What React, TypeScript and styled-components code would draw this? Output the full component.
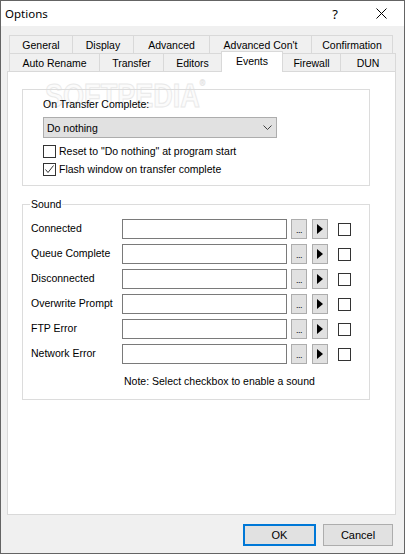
import React from "react";
import styled, { createGlobalStyle } from "styled-components";

const Global = createGlobalStyle`
  html, body { margin: 0; padding: 0; background: #ffffff; }
  body { font-family: "Liberation Sans", Arial, sans-serif; }
  *, *::before, *::after { box-sizing: border-box; }
`;

const Window = styled.div`
  width: 405px;
  height: 554px;
  border: 1px solid #646464;
  display: flex;
  flex-direction: column;
  background: #f0f0f0;
  font-family: "Liberation Sans", Arial, sans-serif;
  font-size: 10.5px;
  color: #000;
  overflow: hidden;
`;

const TitleBar = styled.div`
  height: 25px;
  flex: none;
  background: #ffffff;
  display: flex;
  align-items: center;
  padding-left: 4px;
`;

const Title = styled.div`
  flex: 1;
  font-family: "Noto Sans", "Liberation Sans", sans-serif;
  font-size: 11.5px;
  line-height: 25px;
`;

const CaptionButton = styled.div`
  width: 46px;
  height: 25px;
  display: flex;
  align-items: center;
  justify-content: center;
  font-family: "Noto Sans", "Liberation Sans", sans-serif;
  font-size: 13px;
`;

const Main = styled.div`
  flex: 1;
  padding: 9px 8px 0 6px;
  display: flex;
  flex-direction: column;
`;

const TabRow = styled.div`
  display: flex;
  height: 18px;
  margin-left: 2px;
`;

const Tab = styled.div<{ $w: number; $last?: boolean; $active?: boolean }>`
  width: ${(p) => p.$w}px;
  height: ${(p) => (p.$active ? 21 : 18)}px;
  margin-top: ${(p) => (p.$active ? -2 : 0)}px;
  margin-right: ${(p) => (p.$active ? -1 : 0)}px;
  border-top: 1px solid #d9d9d9;
  border-left: 1px solid #d9d9d9;
  border-right: ${(p) => (p.$last || p.$active ? "1px solid #d9d9d9" : "none")};
  background: ${(p) => (p.$active ? "#ffffff" : "#f0f0f0")};
  position: ${(p) => (p.$active ? "relative" : "static")};
  z-index: ${(p) => (p.$active ? 2 : "auto")};
  display: flex;
  align-items: ${(p) => (p.$active ? "flex-start" : "center")};
  justify-content: center;
  padding-top: ${(p) => (p.$active ? 3 : 1)}px;
  white-space: nowrap;
  flex: none;
`;

const Panel = styled.div`
  height: 444px;
  background: #ffffff;
  border: 1px solid #d9d9d9;
  padding: 17px 0 0 14px;
  position: relative;
  flex: none;
`;

const Watermark = styled.div`
  position: absolute;
  top: 7px;
  left: 37px;
  font-family: "Liberation Sans", Arial, sans-serif;
  font-weight: bold;
  font-size: 33px;
  line-height: 1;
  color: #fbfbfb;
  -webkit-text-stroke: 1px #e9e9e9;
  transform: scaleX(0.82);
  transform-origin: left top;
  pointer-events: none;
  z-index: 0;
  white-space: nowrap;
`;

const Reg = styled.span`
  font-size: 9px;
  vertical-align: top;
  -webkit-text-stroke: 0.5px #e6e6e6;
`;

const Group = styled.div<{ $mt?: number; $pad: string }>`
  width: 348px;
  border: 1px solid #dcdcdc;
  position: relative;
  margin-top: ${(p) => p.$mt ?? 0}px;
  padding: ${(p) => p.$pad};
  display: flex;
  flex-direction: column;
`;

const Legend = styled.span`
  position: absolute;
  top: -7px;
  left: 7px;
  padding: 0 1px;
  background: #ffffff;
  line-height: 13px;
`;

const Label = styled.div`
  line-height: 13px;
  height: 13px;
  position: relative;
`;

const Select = styled.div`
  width: 234px;
  height: 21px;
  margin-top: 6px;
  background: #e1e1e1;
  border: 1px solid #adadad;
  display: flex;
  align-items: center;
  justify-content: space-between;
  padding: 0 4px 0 3px;
`;

const CheckRow = styled.div<{ $mt: number }>`
  display: flex;
  align-items: center;
  gap: 3px;
  height: 13px;
  margin-top: ${(p) => p.$mt}px;
  line-height: 13px;
`;

const Box = styled.div`
  width: 13px;
  height: 13px;
  border: 1px solid #333333;
  background: #ffffff;
  display: flex;
  align-items: center;
  justify-content: center;
  flex: none;
`;

const Rows = styled.div`
  display: flex;
  flex-direction: column;
  gap: 5px;
`;

const SoundRow = styled.div`
  display: flex;
  align-items: center;
  height: 20px;
`;

const SoundLabel = styled.div`
  width: 91px;
  flex: none;
  padding-bottom: 2px;
  line-height: 13px;
  white-space: nowrap;
`;

const Field = styled.div`
  width: 165px;
  height: 20px;
  border: 1px solid #7a7a7a;
  background: #ffffff;
  flex: none;
`;

const SmallButton = styled.div<{ $ml: number }>`
  width: 16px;
  height: 20px;
  margin-left: ${(p) => p.$ml}px;
  background: #e1e1e1;
  border: 1px solid #adadad;
  display: flex;
  justify-content: center;
  flex: none;
`;

const Dots = styled(SmallButton)`
  align-items: flex-end;
  font-size: 9px;
  line-height: 9px;
  padding-bottom: 3px;
  letter-spacing: -0.5px;
`;

const Play = styled(SmallButton)`
  align-items: center;
`;

const SoundCheck = styled(Box)`
  margin-left: 10px;
`;

const Note = styled.div`
  margin: 11px 0 0 93px;
  line-height: 13px;
  height: 13px;
`;

const Footer = styled.div`
  display: flex;
  justify-content: flex-end;
  gap: 7px;
  margin-top: 9px;
  padding-right: 3px;
`;

const DialogButton = styled.div<{ $w: number; $default?: boolean }>`
  width: ${(p) => p.$w}px;
  height: 22px;
  background: #e1e1e1;
  border: ${(p) => (p.$default ? "2px solid #0078d7" : "1px solid #adadad")};
  display: flex;
  align-items: center;
  justify-content: center;
  font-size: 11px;
`;

const row1 = [
  { t: "General", w: 63 },
  { t: "Display", w: 61 },
  { t: "Advanced", w: 76 },
  { t: "Advanced Con't", w: 102 },
  { t: "Confirmation", w: 82 },
];

const row2 = [
  { t: "Auto Rename", w: 90 },
  { t: "Transfer", w: 64 },
  { t: "Editors", w: 58 },
  { t: "Events", w: 62, active: true },
  { t: "Firewall", w: 58 },
  { t: "DUN", w: 56 },
];

const sounds = [
  "Connected",
  "Queue Complete",
  "Disconnected",
  "Overwrite Prompt",
  "FTP Error",
  "Network Error",
];

const CheckMark = () => (
  <svg width="11" height="11" viewBox="0 0 11 11">
    <polyline points="1.5,5.5 4,8.5 9.5,1.5" fill="none" stroke="#333" strokeWidth="1" />
  </svg>
);

export default function App() {
  return (
    <>
      <Global />
      <Window>
        <TitleBar>
          <Title>Options</Title>
          <CaptionButton>?</CaptionButton>
          <CaptionButton>
            <svg width="11" height="11" viewBox="0 0 11 11">
              <line x1="0.5" y1="0.5" x2="10.5" y2="10.5" stroke="#000" strokeWidth="1" />
              <line x1="10.5" y1="0.5" x2="0.5" y2="10.5" stroke="#000" strokeWidth="1" />
            </svg>
          </CaptionButton>
        </TitleBar>
        <Main>
          <TabRow>
            {row1.map((t, i) => (
              <Tab key={t.t} $w={t.w} $last={i === row1.length - 1}>
                {t.t}
              </Tab>
            ))}
          </TabRow>
          <TabRow>
            {row2.map((t, i) => (
              <Tab key={t.t} $w={t.w} $last={i === row2.length - 1} $active={t.active}>
                {t.t}
              </Tab>
            ))}
          </TabRow>
          <Panel>
            <Watermark>
              SOFTPEDIA<Reg>®</Reg>
            </Watermark>
            <Group $pad="8px 0 9px 20px">
              <Label>On Transfer Complete:</Label>
              <Select>
                <span>Do nothing</span>
                <svg width="9" height="5" viewBox="0 0 9 5">
                  <polyline points="0.5,0.5 4.5,4.5 8.5,0.5" fill="none" stroke="#404040" strokeWidth="1" />
                </svg>
              </Select>
              <CheckRow $mt={7}>
                <Box />
                <span>Reset to "Do nothing" at program start</span>
              </CheckRow>
              <CheckRow $mt={5}>
                <Box>
                  <CheckMark />
                </Box>
                <span>Flash window on transfer complete</span>
              </CheckRow>
            </Group>
            <Group $mt={18} $pad="14px 0 11px 8px">
              <Legend>Sound</Legend>
              <Rows>
                {sounds.map((s) => (
                  <SoundRow key={s}>
                    <SoundLabel>{s}</SoundLabel>
                    <Field />
                    <Dots $ml={4}>...</Dots>
                    <Play $ml={5}>
                      <svg width="6" height="10" viewBox="0 0 6 10">
                        <polygon points="0,0 6,5 0,10" fill="#000" />
                      </svg>
                    </Play>
                    <SoundCheck />
                  </SoundRow>
                ))}
              </Rows>
              <Note>Note: Select checkbox to enable a sound</Note>
            </Group>
          </Panel>
          <Footer>
            <DialogButton $w={73} $default>
              OK
            </DialogButton>
            <DialogButton $w={70}>Cancel</DialogButton>
          </Footer>
        </Main>
      </Window>
    </>
  );
}
